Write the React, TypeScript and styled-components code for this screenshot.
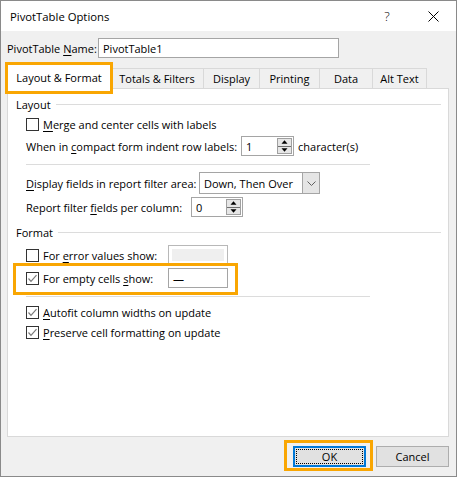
import React from "react";
import styled, { createGlobalStyle } from "styled-components";

const ORANGE = "#f9a602";

const GlobalStyle = createGlobalStyle`
  html, body { margin: 0; padding: 0; background: #ffffff; }
  body {
    font-family: "Open Sans", "Noto Sans", "Liberation Sans", sans-serif;
    font-size: 11px;
    color: #000;
  }
  * { box-sizing: border-box; }
`;

const Dialog = styled.div`
  width: 457px;
  height: 477px;
  border: 1px solid #8a8a8a;
  background: #f0f0f0;
  display: flex;
  flex-direction: column;
`;

const TitleBar = styled.div`
  height: 30px;
  background: #ffffff;
  display: flex;
  align-items: center;
  padding-left: 9px;
  font-size: 11.3px;
`;

const Title = styled.span`
  flex: 1;
`;

const TitleButton = styled.div`
  width: 46px;
  height: 30px;
  display: flex;
  align-items: center;
  justify-content: center;
  font-size: 13px;
  font-weight: 300;
`;

const Body = styled.div`
  flex: 1;
  display: flex;
  flex-direction: column;
  padding: 7px 7px 0 6px;
`;

const NameRow = styled.div`
  display: flex;
  align-items: center;
  height: 20px;
`;

const Label = styled.span<{ $w?: number }>`
  white-space: nowrap;
  ${(p) => (p.$w ? `width: ${p.$w}px; flex: none;` : "")}
`;

const Key = styled.span`
  text-decoration: underline;
  text-underline-offset: 2px;
`;

const TextBox = styled.div<{ $w: number; $h?: number }>`
  width: ${(p) => p.$w}px;
  height: ${(p) => p.$h ?? 20}px;
  border: 1px solid #a5a5a5;
  background: #ffffff;
  display: flex;
  align-items: center;
  padding-left: 4px;
`;

const DisabledBox = styled.div`
  width: 60px;
  height: 20px;
  border: 1px solid #b8b8b8;
  background: #ffffff;
  padding: 3px;
`;

const DisabledFill = styled.div`
  width: 100%;
  height: 100%;
  background: #efefef;
`;

const TabStrip = styled.div`
  display: flex;
  align-items: flex-end;
  height: 23px;
  margin-top: 7px;
  padding-left: 1px;
`;

const Tab = styled.div<{ $w: number }>`
  width: ${(p) => p.$w}px;
  height: 20px;
  margin-left: -1px;
  border: 1px solid #d9d9d9;
  border-bottom: none;
  background: #f0f0f0;
  display: flex;
  align-items: center;
  justify-content: center;
  white-space: nowrap;
  &:nth-child(2) { margin-left: 0; }
`;

const ActiveTab = styled.div`
  position: relative;
  z-index: 1;
  width: 102px;
  height: 26px;
  margin-bottom: -3px;
  background: #ffffff;
  outline: 3px solid ${ORANGE};
  display: flex;
  align-items: center;
  justify-content: center;
  padding-bottom: 1px;
  white-space: nowrap;
`;

const Panel = styled.div`
  height: 349px;
  border: 1px solid #d9d9d9;
  background: #ffffff;
  padding: 7px 7px 0 8px;
  display: flex;
  flex-direction: column;
`;

const GroupHeader = styled.div<{ $mt?: number }>`
  display: flex;
  align-items: center;
  gap: 5px;
  height: 16px;
  margin-top: ${(p) => p.$mt ?? 0}px;
`;

const GroupRule = styled.div`
  flex: 1;
  height: 1px;
  background: #dcdcdc;
`;

const Rows = styled.div`
  display: flex;
  flex-direction: column;
  padding-left: 10px;
`;

const Row = styled.div<{ $mt?: number; $h?: number }>`
  display: flex;
  align-items: center;
  height: ${(p) => p.$h ?? 16}px;
  margin-top: ${(p) => p.$mt ?? 0}px;
  white-space: nowrap;
`;

const Separator = styled.div<{ $mt: number }>`
  width: 344px;
  height: 1px;
  background: #dcdcdc;
  margin-top: ${(p) => p.$mt}px;
`;

const Highlight = styled.div`
  width: 225px;
  height: 32px;
  margin: -2px 0 0 -13px;
  border: 3px solid ${ORANGE};
  padding: 2px 0 0 10px;
  display: flex;
  align-items: flex-start;
`;

const Box = styled.div`
  width: 13px;
  height: 13px;
  border: 1px solid #333333;
  background: #ffffff;
  margin-right: 4px;
  flex: none;
  display: flex;
  align-items: center;
  justify-content: center;
`;

const Spinner = styled.div<{ $w: number }>`
  width: ${(p) => p.$w}px;
  height: 20px;
  border: 1px solid #a5a5a5;
  background: #ffffff;
  display: flex;
  align-items: center;
  padding: 1px 1px 1px 4px;
`;

const SpinValue = styled.span`
  flex: 1;
`;

const SpinButtons = styled.div`
  width: 15px;
  height: 16px;
  border: 1px solid #a0a0a0;
  background: #e6e6e6;
  display: flex;
  flex-direction: column;
`;

const SpinHalf = styled.div<{ $top?: boolean }>`
  flex: 1;
  display: flex;
  align-items: center;
  justify-content: center;
  ${(p) => (p.$top ? "border-bottom: 1px solid #6f6f6f;" : "")}
`;

const Select = styled.div`
  width: 121px;
  height: 22px;
  border: 1px solid #a5a5a5;
  background: #ffffff;
  display: flex;
  align-items: stretch;
`;

const SelectValue = styled.span`
  flex: 1;
  display: flex;
  align-items: center;
  padding-left: 4px;
`;

const SelectArrow = styled.div`
  width: 17px;
  border-left: 1px solid #a5a5a5;
  background: #e5e5e5;
  display: flex;
  align-items: center;
  justify-content: center;
`;

const Trailing = styled.span`
  margin-left: 4px;
`;

const Footer = styled.div`
  display: flex;
  justify-content: flex-end;
  align-items: flex-start;
  gap: 3px;
  margin-top: 3px;
`;

const OkFrame = styled.div`
  border: 3px solid ${ORANGE};
  padding: 3px 4px 1px 6px;
`;

const Button = styled.div<{ $default?: boolean }>`
  width: 73px;
  height: 21px;
  background: #e1e1e1;
  border: ${(p) => (p.$default ? "2px solid #0078d7" : "1px solid #adadad")};
  display: flex;
  align-items: center;
  justify-content: center;
  padding: ${(p) => (p.$default ? "1px" : "0")};
  ${(p) => (p.$default ? "" : "margin-top: 6px;")}
`;

const FocusRing = styled.div`
  width: 100%;
  height: 100%;
  border: 1px dotted #000;
  display: flex;
  align-items: center;
  justify-content: center;
`;

const Check = ({ on }: { on?: boolean }) => (
  <Box>
    {on && (
      <svg width="11" height="11" viewBox="0 0 11 11">
        <polyline points="1.5,5.5 4,8.3 9.5,2.2" fill="none" stroke="#7a7a7a" strokeWidth="1.2" />
      </svg>
    )}
  </Box>
);

const Spin = ({ w, value }: { w: number; value: string }) => (
  <Spinner $w={w}>
    <SpinValue>{value}</SpinValue>
    <SpinButtons>
      <SpinHalf $top>
        <svg width="7" height="4" viewBox="0 0 7 4">
          <polygon points="0.5,3.8 3.5,0.3 6.5,3.8" fill="#000" />
        </svg>
      </SpinHalf>
      <SpinHalf>
        <svg width="7" height="4" viewBox="0 0 7 4">
          <polygon points="0.5,0.2 3.5,3.7 6.5,0.2" fill="#000" />
        </svg>
      </SpinHalf>
    </SpinButtons>
  </Spinner>
);

export default function App() {
  return (
    <>
      <GlobalStyle />
      <Dialog>
        <TitleBar>
          <Title>PivotTable Options</Title>
          <TitleButton>?</TitleButton>
          <TitleButton>
            <svg width="11" height="11" viewBox="0 0 11 11">
              <path d="M0.5 0.5 L10.5 10.5 M10.5 0.5 L0.5 10.5" stroke="#000" strokeWidth="1" fill="none" />
            </svg>
          </TitleButton>
        </TitleBar>
        <Body>
          <NameRow>
            <Label $w={91}>
              PivotTable <Key>N</Key>ame:
            </Label>
            <TextBox $w={241}>PivotTable1</TextBox>
          </NameRow>

          <TabStrip>
            <ActiveTab>Layout &amp; Format</ActiveTab>
            <Tab $w={94}>Totals &amp; Filters</Tab>
            <Tab $w={57}>Display</Tab>
            <Tab $w={61}>Printing</Tab>
            <Tab $w={54}>Data</Tab>
            <Tab $w={55}>Alt Text</Tab>
          </TabStrip>

          <Panel>
            <GroupHeader>
              <span>Layout</span>
              <GroupRule />
            </GroupHeader>
            <Rows>
              <Row $mt={4}>
                <Check />
                <span>
                  <Key>M</Key>erge and center cells with labels
                </span>
              </Row>
              <Row $mt={4} $h={20}>
                <Label $w={215}>
                  When in <Key>c</Key>ompact form indent row labels:
                </Label>
                <Spin w={53} value="1" />
                <Trailing>character(s)</Trailing>
              </Row>
              <Separator $mt={8} />
              <Row $mt={7} $h={22}>
                <Label $w={173}>
                  <Key>D</Key>isplay fields in report filter area:
                </Label>
                <Select>
                  <SelectValue>Down, Then Over</SelectValue>
                  <SelectArrow>
                    <svg width="9" height="5" viewBox="0 0 9 5">
                      <polyline points="0.5,0.5 4.5,4.5 8.5,0.5" fill="none" stroke="#606060" strokeWidth="1" />
                    </svg>
                  </SelectArrow>
                </Select>
              </Row>
              <Row $mt={3} $h={20}>
                <Label $w={165}>
                  Report filter <Key>f</Key>ields per column:
                </Label>
                <Spin w={52} value="0" />
              </Row>
            </Rows>

            <GroupHeader $mt={7}>
              <span>Format</span>
              <GroupRule />
            </GroupHeader>
            <Rows>
              <Row $mt={5} $h={20}>
                <Check />
                <Label $w={125}>
                  For <Key>e</Key>rror values show:
                </Label>
                <DisabledBox>
                  <DisabledFill />
                </DisabledBox>
              </Row>
              <Highlight>
                <Row $h={20}>
                  <Check on />
                  <Label $w={125}>
                    For empty cells <Key>s</Key>how:
                  </Label>
                  <TextBox $w={60}>—</TextBox>
                </Row>
              </Highlight>
              <Separator $mt={1} />
              <Row $mt={7}>
                <Check on />
                <span>
                  <Key>A</Key>utofit column widths on update
                </span>
              </Row>
              <Row $mt={4}>
                <Check on />
                <span>
                  <Key>P</Key>reserve cell formatting on update
                </span>
              </Row>
            </Rows>
          </Panel>

          <Footer>
            <OkFrame>
              <Button $default>
                <FocusRing>OK</FocusRing>
              </Button>
            </OkFrame>
            <Button>Cancel</Button>
          </Footer>
        </Body>
      </Dialog>
    </>
  );
}
